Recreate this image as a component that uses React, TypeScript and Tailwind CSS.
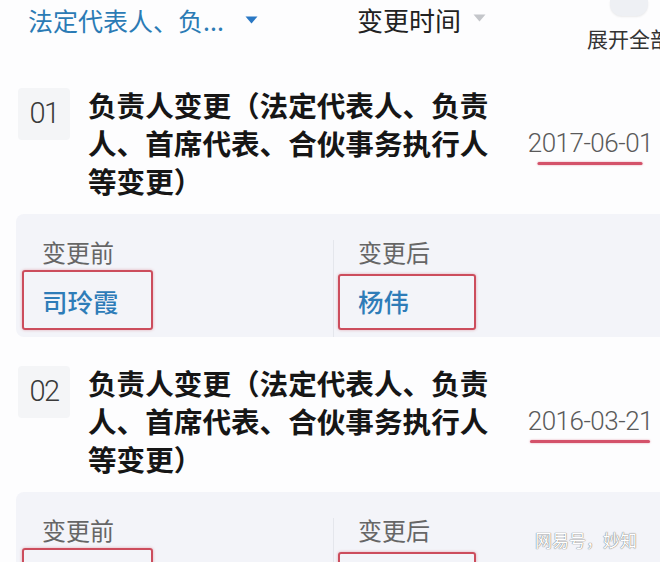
const cjk = "font-['Noto_Sans_CJK_SC',sans-serif]";
const num = "font-['Roboto','Noto_Sans_CJK_SC',sans-serif]";

interface Record {
  no: string;
  date: string;
  before: string;
  after: string;
  lineW: number;
}

const records: Record[] = [
  { no: "01", date: "2017-06-01", before: "司玲霞", after: "杨伟", lineW: 105 },
  { no: "02", date: "2016-03-21", before: "", after: "", lineW: 120 },
];

const Caret = ({ color }: { color: string }) => (
  <svg width="13" height="8" viewBox="0 0 13 8" className="shrink-0">
    <path d="M0.5 0.5 H12.5 L6.5 7.5 Z" fill={color} />
  </svg>
);

const ChangeRow = ({ rec, first }: { rec: Record; first: boolean }) => (
  <div className={first ? "" : "mt-[27px]"}>
    <div className="flex items-start">
      <div className="shrink-0 ml-[18px] mt-[2px] w-[52px] h-[52px] rounded-[4px] bg-[#f4f5f7] flex items-center justify-center">
        <span className={`${num} font-light text-[29px] tracking-[-1.5px] text-[#3a3a3a]`}>{rec.no}</span>
      </div>
      <div className={`${cjk} shrink-0 ml-[18px] w-[412px] text-[28.6px] leading-[38px] font-bold text-[#161616]`}>
        负责人变更（法定代表人、负责人、首席代表、合伙事务执行人等变更）
      </div>
      <div className="flex-1 self-stretch flex items-center justify-end pr-[7px]">
        <div className="relative">
          <span className={`${num} font-light text-[26px] leading-[30px] tracking-[-0.5px] text-[#5a5a5a]`}>
            {rec.date}
          </span>
          <div
            className="absolute left-1/2 -translate-x-1/2 top-[34px] h-[3px] rounded-full bg-[#d4526a] shadow-[0_0_2px_rgba(212,82,106,0.6)]"
            style={{ width: rec.lineW }}
          />
        </div>
      </div>
    </div>

    <div className="mt-[14px] ml-[16px] h-[123px] rounded-l-[8px] bg-[#f3f4f9] flex">
      <div className="relative shrink-0 w-[317px] pl-[26px] pt-[23px]">
        <div className={`${cjk} text-[24px] leading-[30px] text-[#666]`}>变更前</div>
        <div className={`${cjk} mt-[18px] h-[32px] text-[25.5px] leading-[32px] font-medium text-[#2e7cb8]`}>{rec.before}</div>
        <div className="absolute left-[6px] top-[56px] w-[131px] h-[60px] rounded-[3px] border-[2.5px] border-[#cc4d5d] shadow-[0_0_3px_rgba(204,77,93,0.45)]" />
      </div>
      <div className="w-px mt-[26px] bg-[#e4e6ec]" />
      <div className="relative flex-1 pl-[24px] pt-[23px]">
        <div className={`${cjk} text-[24px] leading-[30px] text-[#666]`}>变更后</div>
        <div className={`${cjk} mt-[18px] h-[32px] text-[25.5px] leading-[32px] font-medium text-[#2e7cb8]`}>{rec.after}</div>
        <div className="absolute left-[4px] top-[60px] w-[138px] h-[56px] rounded-[3px] border-[2.5px] border-[#cc4d5d] shadow-[0_0_3px_rgba(204,77,93,0.45)]" />
      </div>
    </div>
  </div>
);

export default function App() {
  return (
    <div className="relative w-[660px] h-[562px] overflow-hidden bg-[#fdfdfe]">
      <div className="flex h-[86px]">
        <div className="shrink-0 w-[357px] pl-[28px] pt-[6px] flex items-start">
          <span className={`${cjk} text-[25px] leading-[28px] text-[#2b7bb5] whitespace-nowrap`}>法定代表人、负...</span>
          <span className="ml-[21px] mt-[10px]">
            <Caret color="#2a78c4" />
          </span>
        </div>
        <div className="shrink-0 w-[230px] pt-[5px] flex items-start">
          <span className={`${cjk} text-[26px] leading-[30px] text-[#222]`}>变更时间</span>
          <span className="ml-[12px] mt-[9px]">
            <Caret color="#c4c6ca" />
          </span>
        </div>
        <div className="shrink-0 flex flex-col">
          <div className="ml-[23px] w-[38px] h-[16px] rounded-b-[12px] bg-[#eef0f4] shadow-[0_1px_2px_rgba(0,0,0,0.08)]" />
          <span className={`${cjk} mt-[9px] text-[21px] leading-[26px] text-[#333] whitespace-nowrap`}>展开全部</span>
        </div>
      </div>

      {records.map((r, i) => (
        <ChangeRow key={r.no} rec={r} first={i === 0} />
      ))}

      <div
        className={`${cjk} absolute left-[535px] top-[529px] text-[17px] leading-[22px] text-white [text-shadow:0_0_1px_#777,0_0_1px_#777]`}
      >
        网易号，妙知
      </div>
    </div>
  );
}
